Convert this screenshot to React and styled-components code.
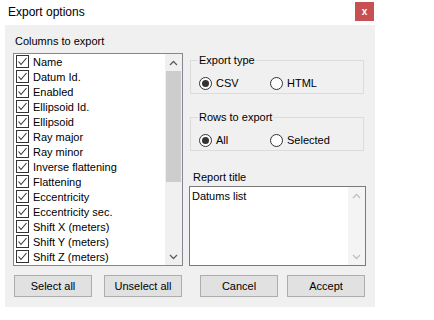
import React from "react";
import styled, { createGlobalStyle } from "styled-components";

const GlobalStyle = createGlobalStyle`
  html, body { margin: 0; padding: 0; background: #fff; }
  body {
    font-family: "Liberation Sans", Arial, sans-serif;
    font-size: 11px;
    color: #000;
  }
`;

const Window = styled.div`
  width: 375px;
  display: flex;
  flex-direction: column;
`;

const TitleBar = styled.div`
  height: 25px;
  display: flex;
  justify-content: space-between;
  align-items: flex-start;
  background: #fff;
`;

const Title = styled.div`
  font-size: 12px;
  line-height: 14px;
  padding: 5px 0 0 8px;
`;

const CloseButton = styled.div`
  width: 19px;
  height: 19px;
  margin: 2px 1px 0 0;
  background: #c75050;
  color: #fff;
  font-weight: bold;
  font-size: 10px;
  line-height: 1;
  display: flex;
  align-items: center;
  justify-content: center;
`;

const Panel = styled.div`
  margin-left: 5px;
  width: 370px;
  height: 282px;
  box-sizing: border-box;
  background: #f0f0f0;
  padding: 9px 0 10px 8px;
  display: flex;
  flex-direction: column;
`;

const Content = styled.div`
  display: flex;
  gap: 6px;
`;

const Column = styled.div`
  width: ${(p) => p.$width}px;
  display: flex;
  flex-direction: column;
`;

const Label = styled.div`
  line-height: 14px;
  margin: ${(p) => p.$margin || "0"};
`;

const ListBox = styled.div`
  height: 213px;
  box-sizing: border-box;
  border: 1px solid #828790;
  background: #fff;
  display: flex;
`;

const Items = styled.div`
  flex: 1;
  display: flex;
  flex-direction: column;
  overflow: hidden;
`;

const Row = styled.div`
  height: 15px;
  flex: none;
  display: flex;
  align-items: center;
  padding-left: 2px;
  white-space: nowrap;
`;

const CheckBox = styled.span`
  width: 13px;
  height: 13px;
  box-sizing: border-box;
  border: 1px solid #333;
  background: #fff;
  margin-right: 4px;
  display: flex;
  align-items: center;
  justify-content: center;
  flex: none;
`;

const ScrollBar = styled.div`
  width: 17px;
  flex: none;
  background: ${(p) => (p.$disabled ? "#f4f4f4" : "#f0f0f0")};
  display: flex;
  flex-direction: column;
`;

const ArrowButton = styled.div`
  height: 17px;
  flex: none;
  display: flex;
  align-items: center;
  justify-content: center;
`;

const Thumb = styled.div`
  margin: 0 1px;
  background: #cdcdcd;
  flex: none;
`;

const Spacer = styled.div`
  flex: 1;
`;

const GroupBox = styled.fieldset`
  margin: ${(p) => p.$mt || 0}px 0 0 1px;
  width: 174px;
  box-sizing: border-box;
  border: 1px solid #dcdcdc;
  padding: 9px 0 3px 8px;
  min-width: 0;
  display: flex;
`;

const Legend = styled.legend`
  padding: 0 1px;
  margin-left: -1px;
  line-height: 14px;
`;

const RadioOption = styled.label`
  width: ${(p) => p.$width || 71}px;
  display: flex;
  align-items: center;
  height: 14px;
`;

const RadioCircle = styled.span`
  width: 13px;
  height: 13px;
  box-sizing: border-box;
  border: 1px solid #333;
  border-radius: 50%;
  background: #fff;
  margin-right: 4px;
  display: flex;
  align-items: center;
  justify-content: center;
  flex: none;
  &::after {
    content: "";
    display: ${(p) => (p.$checked ? "block" : "none")};
    width: 7px;
    height: 7px;
    border-radius: 50%;
    background: #333;
  }
`;

const TextBox = styled.div`
  height: 80px;
  box-sizing: border-box;
  border: 1px solid #7a7a7a;
  background: #fff;
  display: flex;
`;

const TextContent = styled.div`
  flex: 1;
  padding: 2px 0 0 2px;
  line-height: 14px;
`;

const ButtonRow = styled.div`
  display: flex;
  margin-top: 9px;
  padding-left: 1px;
`;

const ButtonGroup = styled.div`
  display: flex;
  gap: ${(p) => p.$gap}px;
  margin-left: ${(p) => p.$ml || 0}px;
`;

const Button = styled.button`
  width: 78px;
  height: 22px;
  box-sizing: border-box;
  border: 1px solid #adadad;
  background: #e1e1e1;
  font-family: inherit;
  font-size: 11px;
  color: #000;
  padding: 0;
  border-radius: 0;
`;

const Chevron = ({ up, color }) => (
  <svg width="9" height="6" viewBox="0 0 9 6">
    <polyline
      points={up ? "1,5 4.5,1.5 8,5" : "1,1 4.5,4.5 8,1"}
      fill="none"
      stroke={color}
      strokeWidth="1.3"
    />
  </svg>
);

const Check = () => (
  <svg width="11" height="11" viewBox="0 0 11 11">
    <polyline points="1.5,5.5 4,8.5 9.5,2" fill="none" stroke="#333" strokeWidth="1.1" />
  </svg>
);

const columns = [
  "Name",
  "Datum Id.",
  "Enabled",
  "Ellipsoid Id.",
  "Ellipsoid",
  "Ray major",
  "Ray minor",
  "Inverse flattening",
  "Flattening",
  "Eccentricity",
  "Eccentricity sec.",
  "Shift X (meters)",
  "Shift Y (meters)",
  "Shift Z (meters)",
];

const Radio = ({ checked, children, width }) => (
  <RadioOption $width={width}>
    <RadioCircle $checked={checked} />
    {children}
  </RadioOption>
);

export default function App() {
  return (
    <>
      <GlobalStyle />
      <Window>
        <TitleBar>
          <Title>Export options</Title>
          <CloseButton>x</CloseButton>
        </TitleBar>
        <Panel>
          <Content>
            <Column $width={170}>
              <Label $margin="0 0 5px 2px">Columns to export</Label>
              <ListBox>
                <Items>
                  {columns.map((c) => (
                    <Row key={c}>
                      <CheckBox>
                        <Check />
                      </CheckBox>
                      {c}
                    </Row>
                  ))}
                </Items>
                <ScrollBar>
                  <ArrowButton>
                    <Chevron up color="#606060" />
                  </ArrowButton>
                  <Thumb style={{ height: 111 }} />
                  <Spacer />
                  <ArrowButton>
                    <Chevron color="#606060" />
                  </ArrowButton>
                </ScrollBar>
              </ListBox>
            </Column>
            <Column $width={177}>
              <GroupBox $mt={19}>
                <Legend>Export type</Legend>
                <Radio checked>CSV</Radio>
                <Radio>HTML</Radio>
              </GroupBox>
              <GroupBox $mt={16}>
                <Legend>Rows to export</Legend>
                <Radio checked>All</Radio>
                <Radio>Selected</Radio>
              </GroupBox>
              <Label $margin="19px 0 2px 4px">Report title</Label>
              <TextBox>
                <TextContent>Datums list</TextContent>
                <ScrollBar $disabled>
                  <ArrowButton>
                    <Chevron up color="#c0c0c0" />
                  </ArrowButton>
                  <Spacer />
                  <ArrowButton>
                    <Chevron color="#c0c0c0" />
                  </ArrowButton>
                </ScrollBar>
              </TextBox>
            </Column>
          </Content>
          <ButtonRow>
            <ButtonGroup $gap={12}>
              <Button>Select all</Button>
              <Button>Unselect all</Button>
            </ButtonGroup>
            <ButtonGroup $gap={9} $ml={18}>
              <Button>Cancel</Button>
              <Button>Accept</Button>
            </ButtonGroup>
          </ButtonRow>
        </Panel>
      </Window>
    </>
  );
}
